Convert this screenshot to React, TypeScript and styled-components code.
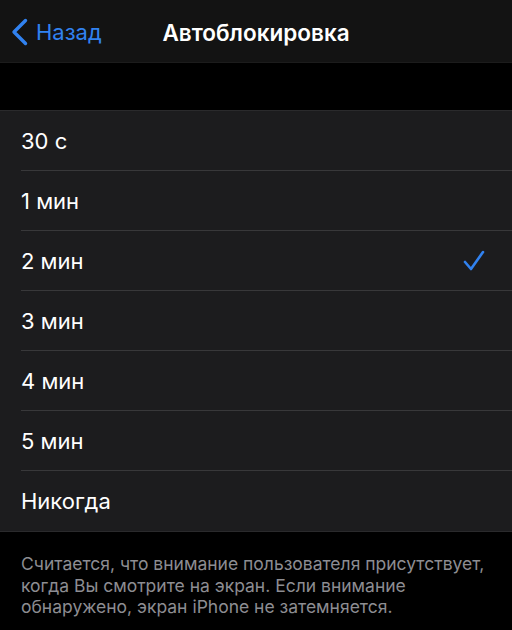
import React, { useState } from 'react';
import styled, { createGlobalStyle } from 'styled-components';

const GlobalStyle = createGlobalStyle`
  html, body {
    margin: 0;
    padding: 0;
    background: #000;
  }
  body {
    font-family: Inter, "Noto Sans", sans-serif;
    -webkit-font-smoothing: antialiased;
  }
`;

const Screen = styled.div`
  width: 512px;
  height: 630px;
  background: #000;
  display: flex;
  flex-direction: column;
  overflow: hidden;
`;

// Navigation bar with back button and centered title
const NavBar = styled.div`
  height: 63px;
  background: #131313;
  display: grid;
  grid-template-columns: 1fr auto 1fr;
  align-items: center;
  border-bottom: 1px solid #1c1c1c;
  box-sizing: border-box;
  padding-top: 2px;
`;

const BackButton = styled.button`
  display: flex;
  align-items: center;
  gap: 8px;
  background: transparent;
  border: none;
  color: #3182f0;
  font-family: inherit;
  font-size: 22px;
  padding: 0 0 0 11px;
  cursor: pointer;
  justify-self: start;
`;

const Title = styled.div`
  color: #fff;
  font-size: 22.5px;
  font-weight: 600;
`;

const Spacer = styled.div`
  height: 47px;
`;

const List = styled.div`
  background: #1c1c1e;
  border-top: 1px solid #2a2a2c;
  border-bottom: 1px solid #2a2a2c;
`;

const Row = styled.div<{ $last?: boolean }>`
  height: 60px;
  display: flex;
  align-items: center;
  padding-left: 21px;
  position: relative;
  cursor: pointer;

  &::after {
    content: '';
    display: ${p => (p.$last ? 'none' : 'block')};
    position: absolute;
    left: 21px;
    right: 0;
    bottom: 0;
    height: 1px;
    background: #38383a;
  }
`;

const Label = styled.span`
  flex: 1;
  color: #fff;
  font-size: 22px;
`;

const Check = styled.span`
  width: 24px;
  margin-right: 25px;
  display: flex;
`;

const Footer = styled.p`
  margin: 0;
  padding: 21px 21px 0;
  color: #8d8d92;
  font-size: 17.5px;
  line-height: 21.5px;
`;

const options = ['30 с', '1 мин', '2 мин', '3 мин', '4 мин', '5 мин', 'Никогда'];

export default function App() {
  const [selected, setSelected] = useState('2 мин');

  return (
    <Screen>
      <GlobalStyle />
      <NavBar>
        <BackButton>
          <svg width="17" height="28" viewBox="0 0 17 28">
            <path d="M14.5 2.5 L3 14 L14.5 25.5" fill="none" stroke="#3182f0" strokeWidth="3.4" strokeLinecap="round" strokeLinejoin="round" />
          </svg>
          Назад
        </BackButton>
        <Title>Автоблокировка</Title>
        <div />
      </NavBar>
      <Spacer />
      <List>
        {options.map((opt, i) => (
          <Row key={opt} $last={i === options.length - 1} onClick={() => setSelected(opt)}>
            <Label>{opt}</Label>
            {selected === opt && (
              <Check>
                <svg width="22" height="22" viewBox="0 0 22 22">
                  <path d="M2 12 L8 19 L20 2" fill="none" stroke="#3182f0" strokeWidth="2.6" strokeLinecap="round" strokeLinejoin="round" />
                </svg>
              </Check>
            )}
          </Row>
        ))}
      </List>
      <Footer>
        Считается, что внимание пользователя присутствует, когда Вы смотрите на экран. Если внимание обнаружено, экран iPhone не затемняется.
      </Footer>
    </Screen>
  );
}
